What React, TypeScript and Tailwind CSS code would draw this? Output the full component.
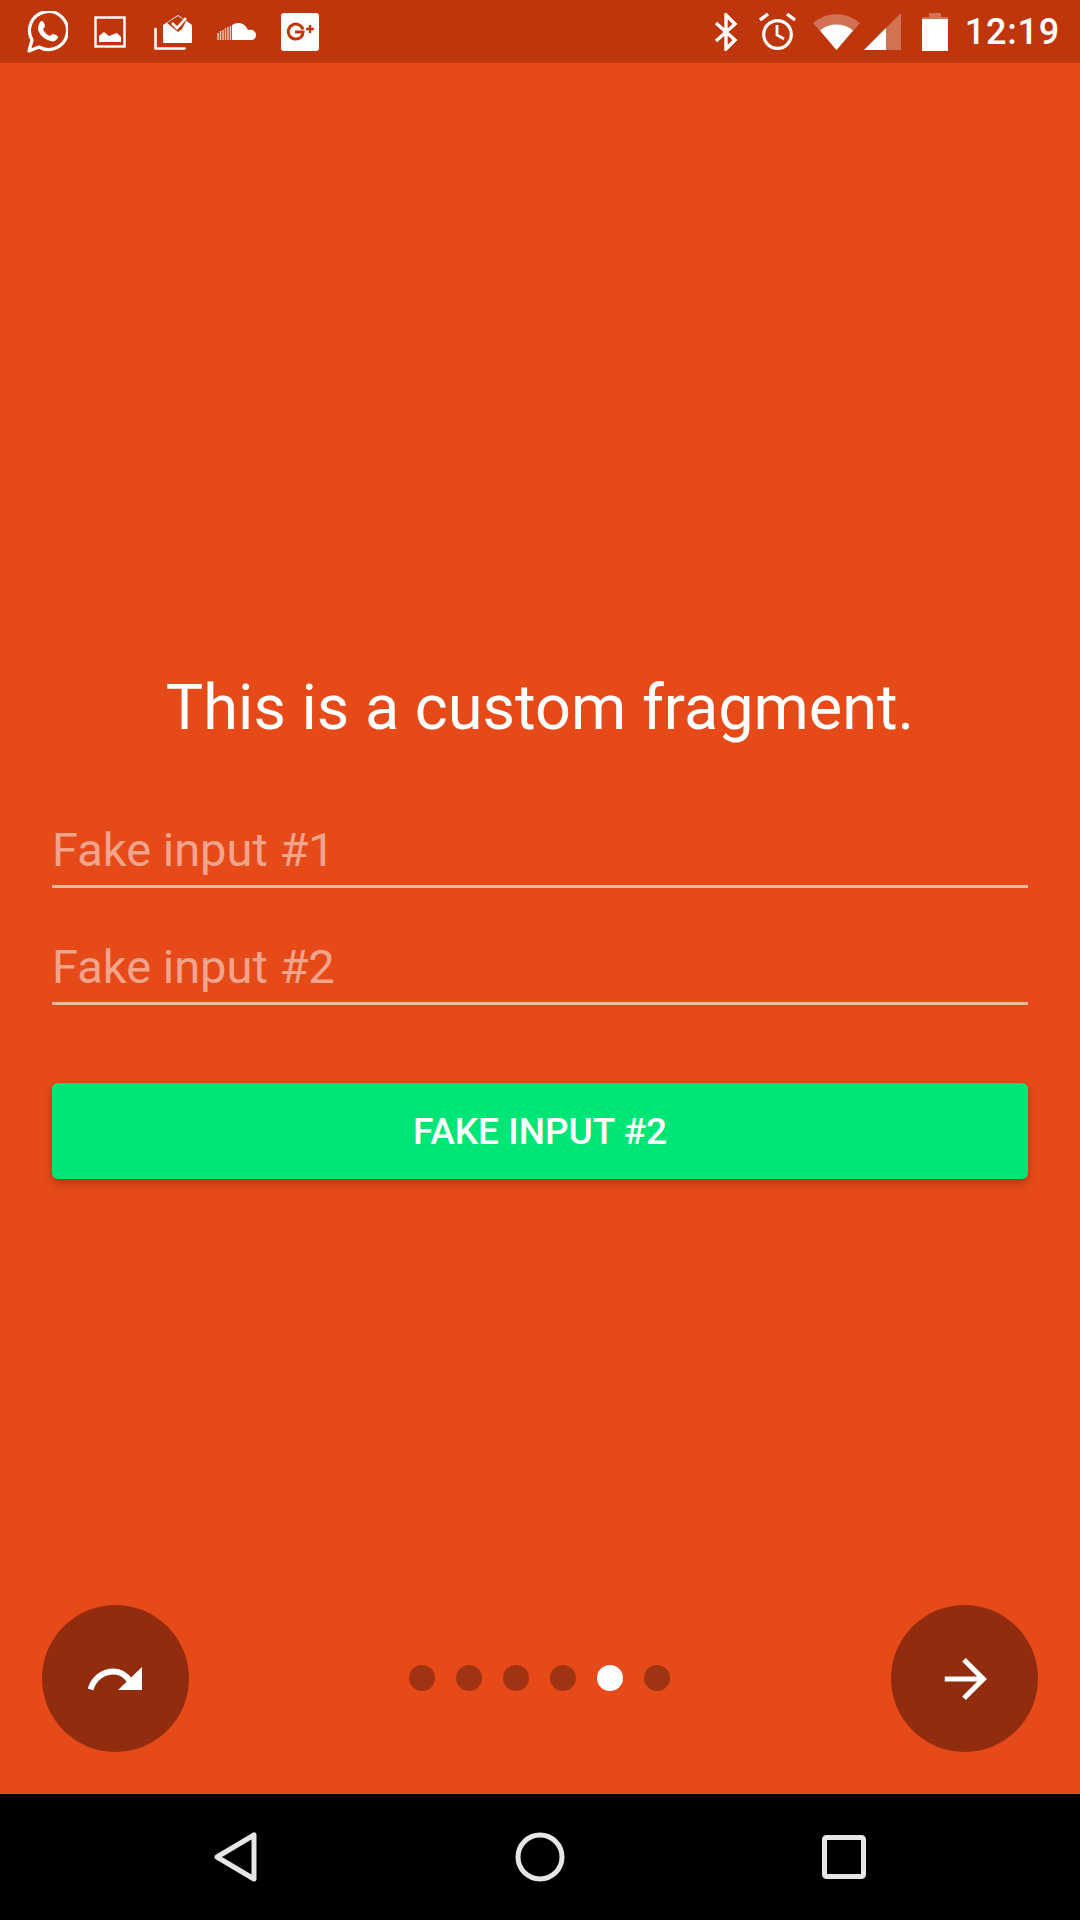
import { ArrowRight } from 'lucide-react';

function StatusIcons() {
  return (
    <div className="flex items-center">
      {/* WhatsApp */}
      <svg width="42" height="42" viewBox="0 0 42 42" className="ml-[26px]">
        <path d="M3 40l3-11a19 19 0 1 1 7 7z" fill="none" stroke="#fff" strokeWidth="3.2" strokeLinejoin="round" />
        <path d="M14 11c2-2 3-1 4 1l1 3c0 1-1 2-2 3 1 3 4 6 7 7 1-1 2-2 3-2l3 1c2 1 3 2 1 4-2 3-5 3-9 1-5-2-9-6-10-11 0-3 1-5 2-7z" fill="#fff" />
      </svg>
      {/* Gallery */}
      <svg width="32" height="32" viewBox="0 0 32 32" className="ml-[26px]">
        <rect x="1.5" y="1.5" width="29" height="29" fill="none" stroke="#fff" strokeWidth="2.4" />
        <path d="M5 26v-6l5-4 5 4 5-2 3-1 4 4v5z" fill="#fff" />
      </svg>
      {/* Mail stack */}
      <svg width="39" height="38" viewBox="0 0 39 38" className="ml-[28px]">
        <path d="M1.5 16v19.5h29" fill="none" stroke="#fff" strokeWidth="2.6" strokeLinecap="round" strokeLinejoin="round" />
        <path d="M9 12L24 2l14 10v17a1 1 0 0 1-1 1H10a1 1 0 0 1-1-1z" fill="#fff" />
        <path d="M13 10l11-7 8 5-4 8-4 3z" fill="#BF360C" />
        <path d="M18 10l5 5 9-10" fill="none" stroke="#fff" strokeWidth="2.6" />
      </svg>
      {/* SoundCloud */}
      <svg width="39" height="19" viewBox="0 0 39 19" className="ml-[24px]">
        <path d="M15 18V3c6-4 13-2 16 5 4-1 8 1 8 5 0 3-2 5-5 5z" fill="#fff" />
        <path d="M1 11v7M3.500 9v9M6 8v10M8.500 6v12M11 5v13M13.500 4v14" stroke="#fff" strokeOpacity="0.7" strokeWidth="1.500" />
      </svg>
      {/* Google Plus */}
      <div className="ml-[25px] flex h-[38px] w-[38px] items-center justify-center rounded-[3px] bg-white">
        <svg width="30" height="20" viewBox="0 0 30 20">
          <path d="M18 7.5A7.5 7.5 0 1 0 16 15c1.5-1.300 2-3 2-5H10" fill="none" stroke="#BF360C" strokeWidth="3" />
          <path d="M21 7h8M25 3v8" stroke="#BF360C" strokeWidth="2.400" />
        </svg>
      </div>
    </div>
  );
}

function SystemIcons() {
  return (
    <div className="flex items-center pr-[20px]">
      {/* Bluetooth */}
      <svg width="24" height="38" viewBox="0 0 24 38">
        <path d="M2 10l19 17-9 9V2l9 9-19 17" fill="none" stroke="#fff" strokeWidth="3.400" />
      </svg>
      {/* Alarm */}
      <svg width="37" height="38" viewBox="0 0 37 38" className="ml-[21px]">
        <circle cx="18.500" cy="21.500" r="13.800" fill="none" stroke="#fff" strokeWidth="3.200" />
        <path d="M18 12v10l7 4" fill="none" stroke="#fff" strokeWidth="2.800" />
        <path d="M1 7l8-6M36 7l-8-6" stroke="#fff" strokeWidth="3.400" />
      </svg>
      {/* Wifi */}
      <svg width="47" height="37" viewBox="0 0 47 37" className="ml-[17px]">
        <path d="M0 10a36 36 0 0 1 47 0L23.500 37z" fill="#fff" fillOpacity="0.3" />
        <path d="M7 17.500a26 26 0 0 1 33 0L23.500 37z" fill="#fff" />
      </svg>
      {/* Signal */}
      <svg width="37" height="37" viewBox="0 0 37 37" className="ml-[4px]">
        <path d="M37 0v37H0z" fill="#fff" fillOpacity="0.3" />
        <path d="M22 15v22H0z" fill="#fff" />
      </svg>
      {/* Battery */}
      <svg width="26" height="38" viewBox="0 0 26 38" className="ml-[21px]">
        <path d="M0 4h7V0h12v4h7v7H0z" fill="#fff" fillOpacity="0.3" />
        <path d="M0 6h26v32H0z" fill="#fff" />
      </svg>
      <span className="ml-[17px] text-[36px] leading-none font-medium tracking-[0.8px] text-white">12:19</span>
    </div>
  );
}

function SkipIcon() {
  return (
    <svg width="54" height="24" viewBox="0 0 54 24" className="-ml-[2px]">
      <path d="M2.500 22.500C6 11 15 4.500 26 4.500c7 0 12 4 16 9.500" fill="none" stroke="#fff" strokeWidth="6" />
      <path d="M54 0v23H30z" fill="#fff" />
    </svg>
  );
}

function FakeInput({ label }: { label: string }) {
  return (
    <div className="flex h-[69px] items-start border-b-[3px] border-white/60">
      <input
        readOnly
        placeholder={label}
        className="mt-[1px] w-full bg-transparent text-[47px] leading-[60px] outline-none placeholder:text-white/50"
      />
    </div>
  );
}

export default function App() {
  const dots = [0, 1, 2, 3, 4, 5];

  return (
    <div className="flex h-[1920px] w-[1080px] flex-col bg-[#E64A19] font-['Roboto',sans-serif]">
      {/* Status bar */}
      <div className="flex h-[63px] items-center justify-between bg-[#BF360C]">
        <StatusIcons />
        <SystemIcons />
      </div>

      <div className="flex flex-1 flex-col px-[52px]">
        <h1 className="mt-[605px] text-center text-[63px] leading-[80px] font-normal text-white">
          This is a custom fragment.
        </h1>
        <div className="mt-[71px] flex flex-col gap-[48px]">
          <FakeInput label="Fake input #1" />
          <FakeInput label="Fake input #2" />
        </div>
        <button className="mt-[78px] h-[96px] w-full rounded-[6px] bg-[#00E676] pt-[2px] text-[37px] font-medium text-white shadow-[0_4px_8px_rgba(0,0,0,0.25)]">
          FAKE INPUT #2
        </button>
      </div>

      {/* Pager controls */}
      <div className="flex items-center justify-between pr-[42px] pb-[42px] pl-[42px]">
        <div className="flex h-[147px] w-[147px] items-center justify-center rounded-full bg-[#922C0F]">
          <SkipIcon />
        </div>
        <div className="-mt-[1px] -ml-[2px] flex items-center gap-[21px]">
          {dots.map((i) => (
            <div key={i} className={i === 4 ? 'h-[26px] w-[26px] rounded-full bg-white' : 'h-[26px] w-[26px] rounded-full bg-[#A03311]'} />
          ))}
        </div>
        <div className="flex h-[147px] w-[147px] items-center justify-center rounded-full bg-[#922C0F]">
          <ArrowRight size={66} strokeWidth={1.9} strokeLinecap="butt" strokeLinejoin="miter" color="#fff" className="-ml-[2px]" />
        </div>
      </div>

      {/* Navigation bar */}
      <div className="flex h-[126px] items-center justify-center bg-black">
        <div className="flex w-[304px] justify-center">
          <svg width="44" height="50" viewBox="0 0 44 50">
            <path d="M40 3v44L3 25z" fill="none" stroke="#e6e6e6" strokeWidth="5" strokeLinejoin="round" />
          </svg>
        </div>
        <div className="flex w-[304px] justify-center">
          <svg width="50" height="50" viewBox="0 0 50 50">
            <circle cx="25" cy="25" r="22" fill="none" stroke="#e6e6e6" strokeWidth="5" />
          </svg>
        </div>
        <div className="flex w-[304px] justify-center">
          <svg width="44" height="44" viewBox="0 0 44 44">
            <rect x="2.500" y="2.500" width="39" height="39" rx="2" fill="none" stroke="#e6e6e6" strokeWidth="5" />
          </svg>
        </div>
      </div>
    </div>
  );
}
